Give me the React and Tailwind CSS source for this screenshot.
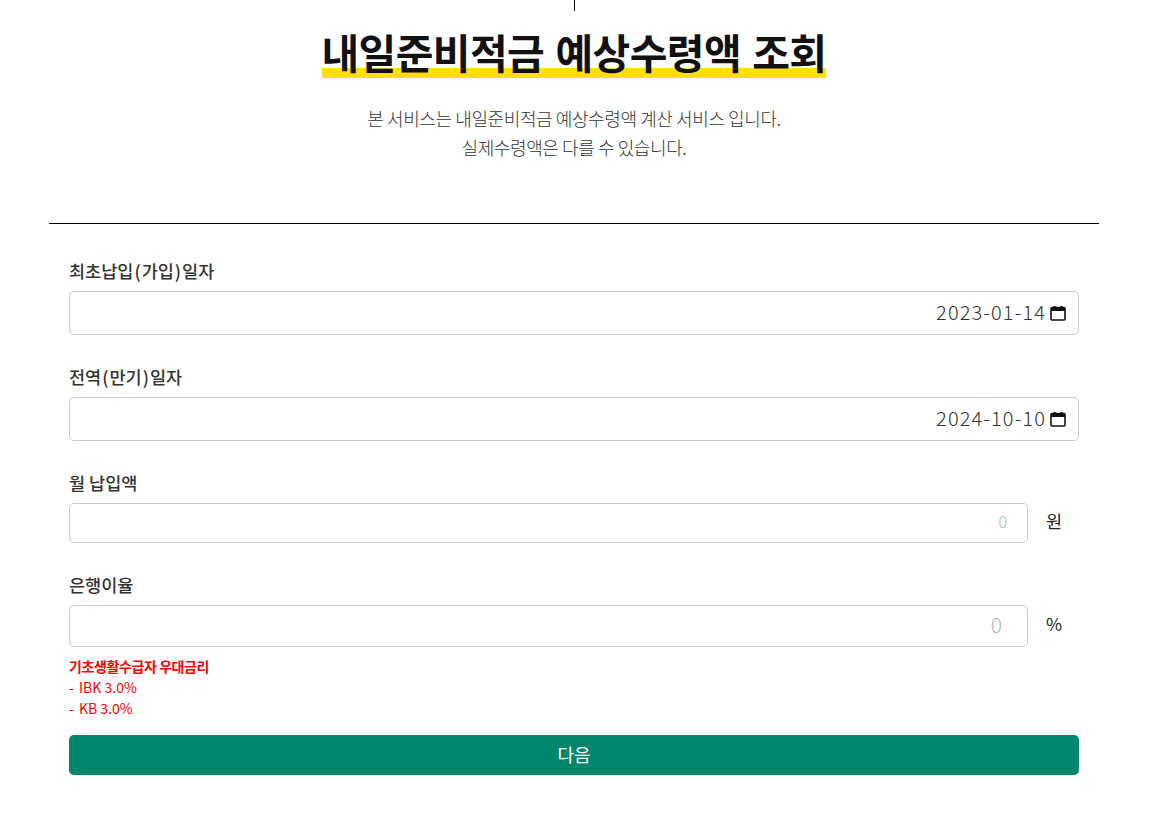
const font = { fontFamily: '"Noto Sans CJK KR", "Noto Sans", sans-serif' };

function CalendarIcon() {
  return (
    <svg width="16" height="16" viewBox="0 0 16 16" className="ml-[4px] shrink-0">
      <path d="M2 2.500h12a1 1 0 0 1 1 1v10.500a1 1 0 0 1-1 1H2a1 1 0 0 1-1-1V3.500a1 1 0 0 1 1-1z" fill="none" stroke="#111" strokeWidth="1.6" />
      <rect x="1" y="2.500" width="14" height="3.500" fill="#111" />
      <rect x="3.500" y="1" width="2" height="2" fill="#111" />
      <rect x="10.500" y="1" width="2" height="2" fill="#111" />
    </svg>
  );
}

function Label({ children }) {
  return <div className="h-[24px] text-[17.500px] leading-[24px] font-medium text-[#333]">{children}</div>;
}

function Paren({ children }) {
  return <span className="mx-px">{children}</span>;
}

function DateField({ label, value }) {
  return (
    <div>
      <Label>{label}</Label>
      <div className="mt-[8px] h-[44px] flex items-center justify-end rounded-[5px] border border-[#ccc] pr-[12px] text-[20px] tracking-[1.1px] font-light text-[#333]">
        <span className="pb-[2px]">{value}</span>
        <CalendarIcon />
      </div>
    </div>
  );
}

function NumberField({ label, unit, h, sizeClass, pr }) {
  return (
    <div>
      <Label>{label}</Label>
      <div className="mt-[8px] flex items-center">
        <input
          readOnly
          placeholder="0"
          className={`${h} ${sizeClass} ${pr} w-[959px] rounded-[5px] border border-[#ccc] pb-[4px] text-right font-light outline-none placeholder:text-[#b4b4b4]`}
          style={font}
        />
        <span className="ml-[18px] pb-[4px] text-[17.500px] text-[#222] font-normal">{unit}</span>
      </div>
    </div>
  );
}

export default function App() {
  return (
    <div className="min-h-[813px] bg-white" style={font}>
      <div className="w-[1050px] ml-[49px]">
        <div className="mx-auto h-[11px] w-px bg-black" />
        <div className="mt-[13px] flex justify-center">
          <h1 className="relative h-[54px] text-[41px] leading-[54px] font-bold tracking-[-0.6px] [word-spacing:2.500px] text-[#111] whitespace-nowrap">
            <span className="absolute left-0 right-0 top-[44px] h-[10px] bg-[#ffe000]" />
            <span className="relative">내일준비적금 예상수령액 조회</span>
          </h1>
        </div>
        <div className="mt-[26px] text-center text-[18px] leading-[29px] font-light tracking-[-0.4px] text-[#333]">
          <p>본 서비스는 내일준비적금 예상수령액 계산 서비스 입니다.</p>
          <p>실제수령액은 다를 수 있습니다.</p>
        </div>
        <div className="mt-[61px] h-px bg-black" />
        <div className="px-[20px] pt-[35px]">
          <DateField label={<>최초납입<Paren>(</Paren>가입<Paren>)</Paren>일자</>} value="2023-01-14" />
          <div className="mt-[30px]">
            <DateField label={<>전역<Paren>(</Paren>만기<Paren>)</Paren>일자</>} value="2024-10-10" />
          </div>
          <div className="mt-[30px]">
            <NumberField label="월 납입액" unit="원" h="h-[40px]" sizeClass="text-[16px]" pr="pr-[20px]" />
          </div>
          <div className="mt-[30px]">
            <NumberField label="은행이율" unit="%" h="h-[42px]" sizeClass="text-[21px]" pr="pr-[25px]" />
          </div>
          <div className="mt-[9px] text-[14px] leading-[21px] text-[#ff0000] font-normal">
            <p className="font-bold tracking-[-0.4px]">기초생활수급자 우대금리</p>
            <p><span className="mr-[2px]">-</span> IBK 3.0%</p>
            <p><span className="mr-[2px]">-</span> KB 3.0%</p>
          </div>
          <button className="mt-[16px] h-[40px] w-full rounded-[5px] bg-[#00866b] pb-[2px] text-[18px] font-normal text-white">
            다음
          </button>
        </div>
      </div>
    </div>
  );
}
